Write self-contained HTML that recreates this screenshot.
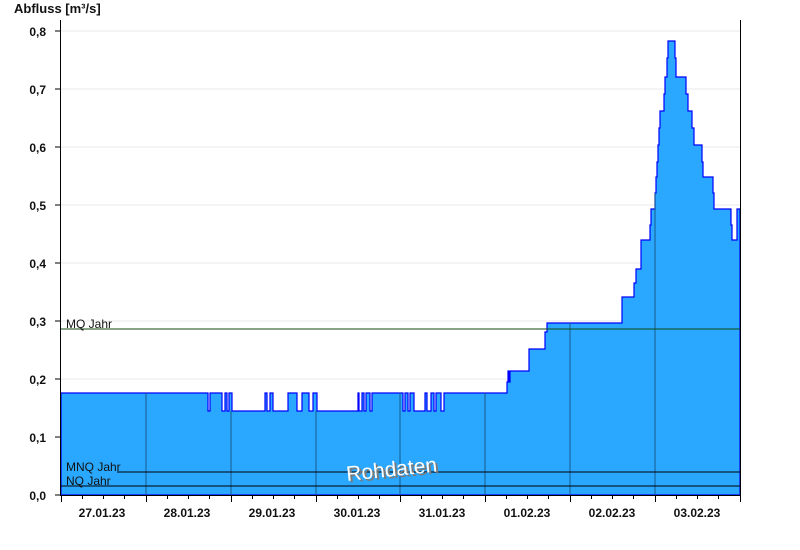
<!DOCTYPE html>
<html><head><meta charset="utf-8"><style>
html,body{margin:0;padding:0;background:#fff;width:800px;height:550px;overflow:hidden}
</style></head><body>
<svg width="800" height="550" xmlns="http://www.w3.org/2000/svg" font-family="Liberation Sans, Arial, sans-serif">
<text x="14" y="13" font-size="13" font-weight="bold" fill="#111">Abfluss [m³/s]</text>
<g stroke="#e8e8e8" stroke-width="1">
<line x1="61" y1="31" x2="740" y2="31"/><line x1="61" y1="89" x2="740" y2="89"/><line x1="61" y1="147" x2="740" y2="147"/><line x1="61" y1="205" x2="740" y2="205"/><line x1="61" y1="263" x2="740" y2="263"/><line x1="61" y1="321" x2="740" y2="321"/><line x1="61" y1="379" x2="740" y2="379"/><line x1="61" y1="437" x2="740" y2="437"/>
</g>
<path fill="#2aa8ff" stroke="#0000ff" stroke-width="1.2" d="M61,495 V393 H208 V411 H210 V393 H222 V411 H225 V393 H227 V411 H229 V393 H232 V411 H265 V393 H267 V411 H270 V393 H273 V411 H280 V411 H288 V393 H297 V411 H302 V393 H309 V411 H313 V393 H317 V411 H358 V393 H359 V411 H362 V393 H364 V411 H366 V393 H370 V411 H372 V393 H403 V411 H405 V393 H408 V411 H410 V393 H414 V411 H425 V393 H427 V411 H431 V393 H434 V411 H436 V393 H441 V411 H444 V393 H507 V382 H508 V371 H509 V382 H510 V371 H529 V349 H545 V332 H547 V323 H622 V297 H634 V283 H636 V269 H641 V240 H650 V225 H651 V209 H655 V193 H656 V177 H657 V162 H658 V145 H659 V128 H660 V111 H664 V94 H665 V77 H667 V58 H668 V41 H675 V58 H676 V77 H686 V94 H688 V111 H692 V128 H694 V145 H702 V162 H703 V177 H713 V193 H714 V209 H731 V225 H732 V240 H737 V209 H740 V495 Z"/>
<g stroke="#1a5a8a" stroke-width="1">
<line x1="146" y1="393" x2="146" y2="495"/><line x1="231" y1="411" x2="231" y2="495"/><line x1="316" y1="411" x2="316" y2="495"/><line x1="400" y1="393" x2="400" y2="495"/><line x1="485" y1="393" x2="485" y2="495"/><line x1="570" y1="323" x2="570" y2="495"/><line x1="655" y1="193" x2="655" y2="495"/>
</g>
<line x1="61" y1="329" x2="740" y2="329" stroke="#0f4a0f" stroke-width="1"/>
<line x1="117" y1="472" x2="740" y2="472" stroke="#000" stroke-width="1"/>
<line x1="61" y1="486" x2="740" y2="486" stroke="#000" stroke-width="1"/>
<g font-size="12" fill="#111">
<text x="66" y="328">MQ Jahr</text><text x="66" y="471">MNQ Jahr</text><text x="66" y="485">NQ Jahr</text>
</g>
<g transform="translate(347,481) rotate(-6)" font-size="21">
<text x="2" y="2" fill="#7a7a7a">Rohdaten</text>
<text x="0" y="0" fill="#fff">Rohdaten</text>
</g>
<line x1="60.5" y1="20" x2="60.5" y2="496" stroke="#000"/>
<line x1="740.5" y1="20" x2="740.5" y2="496" stroke="#000"/>
<line x1="60" y1="495.5" x2="741" y2="495.5" stroke="#000"/>
<g stroke="#000">
<line x1="55" y1="31" x2="60" y2="31"/><line x1="55" y1="89" x2="60" y2="89"/><line x1="55" y1="147" x2="60" y2="147"/><line x1="55" y1="205" x2="60" y2="205"/><line x1="55" y1="263" x2="60" y2="263"/><line x1="55" y1="321" x2="60" y2="321"/><line x1="55" y1="379" x2="60" y2="379"/><line x1="55" y1="437" x2="60" y2="437"/><line x1="55" y1="495" x2="60" y2="495"/>
<path d="M61.5,495v7M146.5,495v7M231.5,495v7M316.5,495v7M400.5,495v7M485.5,495v7M570.5,495v7M655.5,495v7M740.5,495v7"/>
<path d="M82.5,495v4M103.5,495v4M124.5,495v4M167.5,495v4M188.5,495v4M209.5,495v4M252.5,495v4M273.5,495v4M294.5,495v4M337.5,495v4M358.5,495v4M379.5,495v4M421.5,495v4M442.5,495v4M463.5,495v4M506.5,495v4M527.5,495v4M548.5,495v4M591.5,495v4M612.5,495v4M633.5,495v4M676.5,495v4M697.5,495v4M718.5,495v4"/>
</g>
<g font-size="12" font-weight="bold" fill="#111" text-anchor="end">
<text x="46" y="36">0,8</text><text x="46" y="94">0,7</text><text x="46" y="152">0,6</text><text x="46" y="210">0,5</text><text x="46" y="268">0,4</text><text x="46" y="326">0,3</text><text x="46" y="384">0,2</text><text x="46" y="442">0,1</text><text x="46" y="500">0,0</text>
</g>
<g font-size="12" font-weight="bold" fill="#111" text-anchor="middle">
<text x="102" y="517">27.01.23</text><text x="187" y="517">28.01.23</text><text x="272" y="517">29.01.23</text><text x="357" y="517">30.01.23</text><text x="442" y="517">31.01.23</text><text x="527" y="517">01.02.23</text><text x="612" y="517">02.02.23</text><text x="697" y="517">03.02.23</text>
</g>
</svg>
</body></html>
